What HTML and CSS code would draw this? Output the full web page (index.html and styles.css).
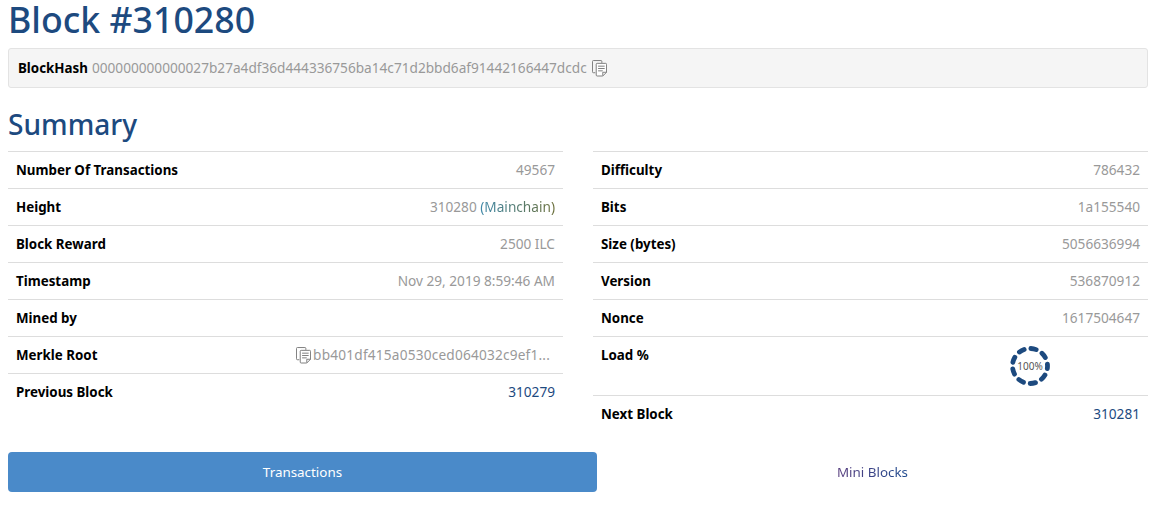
FILE: index.html
```html
<!DOCTYPE html>
<html lang="en">
<head>
<meta charset="utf-8">
<title>Block #310280</title>
<link rel="stylesheet" href="styles.css">
</head>
<body>
<svg class="defs" width="0" height="0" aria-hidden="true">
  <symbol id="copy" viewBox="0 0 16 18">
    <path d="M3.5 13.5H1.5a1 1 0 0 1-1-1V1.5a1 1 0 0 1 1-1h8a1 1 0 0 1 1 1V3" fill="none" stroke="currentColor"/>
    <path d="M5.5 3.5h9a1 1 0 0 1 1 1v8.500l-4 4h-6a1 1 0 0 1-1-1v-11.500a1 1 0 0 1 1-1z" fill="#fff" stroke="currentColor"/>
    <path d="M6.500 6.500h7M6.500 9h7M6.500 11.500h5M11.500 16.500v-3.500h4" fill="none" stroke="currentColor"/>
  </symbol>
</svg>
<main class="page">
  <h1 class="title">Block #310280</h1>
  <div class="hash-panel">
    <strong class="key">BlockHash</strong>
    <span class="muted">000000000000027b27a4df36d444336756ba14c71d2bbd6af91442166447dcdc</span>
    <svg class="copy-icon"><use href="#copy"/></svg>
  </div>
  <h2 class="subtitle">Summary</h2>
  <div class="columns">
    <div class="list">
      <div class="row"><span class="key">Number Of Transactions</span><span class="muted">49567</span></div>
      <div class="row"><span class="key">Height</span><span class="muted">310280 <span class="chain">(Mainchain)</span></span></div>
      <div class="row"><span class="key">Block Reward</span><span class="muted">2500 ILC</span></div>
      <div class="row"><span class="key">Timestamp</span><span class="muted">Nov 29, 2019 8:59:46 AM</span></div>
      <div class="row"><span class="key">Mined by</span></div>
      <div class="row"><span class="key">Merkle Root</span><span class="muted merkle"><svg class="copy-icon"><use href="#copy"/></svg><span class="merkle-text">bb401df415a0530ced064032c9ef1...</span></span></div>
      <div class="row"><span class="key">Previous Block</span><a class="link" href="#">310279</a></div>
    </div>
    <div class="list">
      <div class="row"><span class="key">Difficulty</span><span class="muted">786432</span></div>
      <div class="row"><span class="key">Bits</span><span class="muted">1a155540</span></div>
      <div class="row"><span class="key">Size (bytes)</span><span class="muted">5056636994</span></div>
      <div class="row"><span class="key">Version</span><span class="muted">536870912</span></div>
      <div class="row"><span class="key">Nonce</span><span class="muted">1617504647</span></div>
      <div class="row row-load">
        <span class="key">Load %</span>
        <div class="gauge">
          <svg class="gauge-ring" viewBox="0 0 40 40"><circle cx="20" cy="20" r="17.500" fill="none" stroke="#1d4a7f" stroke-width="4.800" stroke-linecap="round" stroke-dasharray="5.400 6.817" stroke-dashoffset="2.700"/></svg>
          <span class="gauge-label">100%</span>
        </div>
      </div>
      <div class="row"><span class="key">Next Block</span><a class="link" href="#">310281</a></div>
    </div>
  </div>
  <nav class="tabs">
    <a class="tab tab-active" href="#">Transactions</a>
    <a class="tab" href="#"><span class="tab-label">Mini Blocks</span></a>
  </nav>
</main>
</body>
</html>
```

FILE: styles.css
```css
* { box-sizing: border-box; }
html, body { margin: 0; padding: 0; background: #fff; }
body {
  font-family: "Noto Sans", "Open Sans", sans-serif;
  font-size: 14px;
  line-height: 20px;
  color: #333;
  overflow: hidden;
}
.defs { position: absolute; }
.page { width: 1156px; padding: 0 8px; }
.title {
  margin: 0;
  height: 48px;
  font-size: 35.7px;
  line-height: 38px;
  font-weight: 500;
  color: #1d4a7f;
}
.hash-panel {
  display: flex;
  align-items: center;
  gap: 4px;
  height: 40px;
  padding: 0 9px;
  background: #f5f5f5;
  border: 1px solid #e3e3e3;
  border-radius: 3px;
}
.key { font-weight: 700; color: #000; font-size: 13.35px; }
.muted { color: #999; font-size: 13.65px; }
.chain {
  background: linear-gradient(90deg, #3f88a8, #6b6f3a);
  -webkit-background-clip: text;
  background-clip: text;
  color: transparent;
}
.copy-icon { width: 15px; height: 17px; color: #777; flex: none; margin-left: 1px; }
.subtitle {
  margin: 0;
  height: 63px;
  padding-top: 18px;
  font-size: 28.1px;
  line-height: 36px;
  font-weight: 500;
  color: #1d4a7f;
}
.columns { display: grid; grid-template-columns: 555px 555px; gap: 30px; }
.row {
  display: flex;
  justify-content: space-between;
  height: 37px;
  padding: 8px;
  border-top: 1px solid #ddd;
}
.row-load { height: 59px; }
.merkle { display: flex; align-items: center; gap: 2px; padding-right: 5px; }
.merkle-text { letter-spacing: 0.2px; }
.link { color: #1d4a7f; text-decoration: none; font-size: 13.65px; }
.gauge {
  position: absolute;
  left: 1010px;
  top: 346px;
  width: 40px;
  height: 40px;
  display: flex;
  align-items: center;
  justify-content: center;
}
.gauge-ring { position: absolute; inset: 0; width: 40px; height: 40px; }
.gauge-label { font-size: 10px; line-height: 12px; color: #555; }
.tabs { display: grid; grid-template-columns: 589px 551px; margin-top: 20px; }
.tab {
  display: block;
  height: 40px;
  line-height: 40px;
  text-align: center;
  font-size: 13.4px;
  color: #1d4a7f;
  text-decoration: none;
  border-radius: 4px;
}
.tab-label {
  background: linear-gradient(90deg, #5a3f7f, #1d4a8f);
  -webkit-background-clip: text;
  background-clip: text;
  color: transparent;
}
.tab-active { background: #4a8ac9; color: #fff; }
```
